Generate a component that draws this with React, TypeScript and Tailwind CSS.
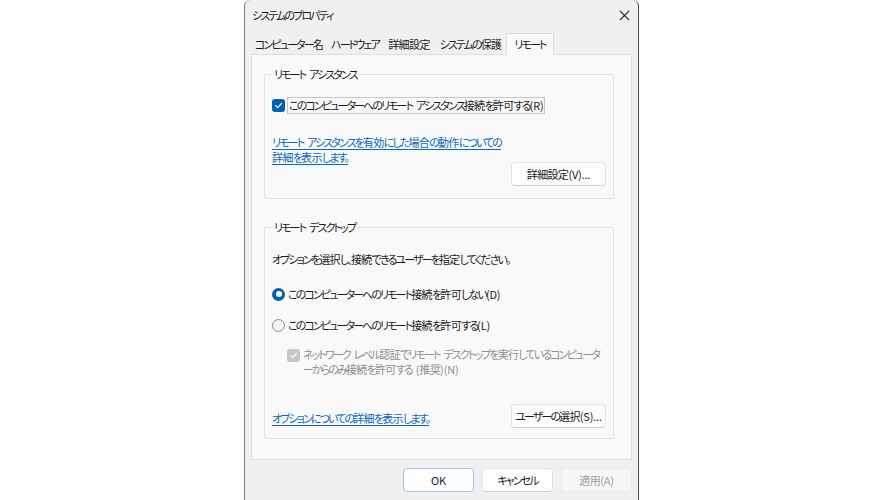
import React from "react";

const font = "font-['Noto_Sans_CJK_JP','Noto_Sans',sans-serif] [font-feature-settings:'palt']";

function J({ s }: { s: string }) {
  const parts = s.match(/( +|[\x21-\x7e]+|[\u4e00-\u9fff]+|[^\x20-\x7e\u4e00-\u9fff]+)/g) || [];
  return (
    <>
      {parts.map((p, i) =>
        /^ +$/.test(p) ? (
          <span key={i} className="tracking-[1.5px]">
            {"\u00a0"}
          </span>
        ) : /^[\x21-\x7e]+$/.test(p) ? (
          <span key={i} className="tracking-[-0.2px]">
            {p}
          </span>
        ) : /^[\u4e00-\u9fff]+$/.test(p) ? (
          <span key={i} className="tracking-[-0.6px]">
            {p}
          </span>
        ) : (
          <span key={i} className="tracking-[-1.9px]">
            {p}
          </span>
        )
      )}
    </>
  );
}

function Check({ disabled }: { disabled?: boolean }) {
  return (
    <span
      className={`flex h-[13px] w-[13px] shrink-0 items-center justify-center rounded-[3px] ${
        disabled ? "bg-[#c6c6c6]" : "bg-[#005fb8]"
      }`}
    >
      <svg width="9" height="9" viewBox="0 0 10 10">
        <path d="M1.8 5.2 L4 7.3 L8.3 2.8" fill="none" stroke="white" strokeWidth="1.3" strokeLinecap="round" strokeLinejoin="round" />
      </svg>
    </span>
  );
}

function Radio({ checked }: { checked?: boolean }) {
  return checked ? (
    <span className="flex h-[13px] w-[13px] shrink-0 items-center justify-center rounded-full bg-[#005fb8]">
      <span className="h-[6px] w-[6px] rounded-full bg-white" />
    </span>
  ) : (
    <span className="h-[13px] w-[13px] shrink-0 rounded-full border border-[#8a8a8a] bg-[#f5f5f5]" />
  );
}

function Btn({ children, primary, disabled, className = "" }: { children: string; primary?: boolean; disabled?: boolean; className?: string }) {
  return (
    <div
      className={`flex h-[24px] items-center justify-center whitespace-nowrap rounded-[4px] border text-[11px] ${
        primary
          ? "border-[#9fc3e6] bg-[#fdfdfd] text-[#1b1b1b]"
          : disabled
          ? "border-[#ececec] bg-[#f6f6f6] text-[#a0a0a0]"
          : "border-[#e2e2e2] border-b-[#d0d0d0] bg-[#fdfdfd] text-[#1b1b1b]"
      } ${className}`}
    >
      <span>
        <J s={children} />
      </span>
    </div>
  );
}

export default function App() {
  const tabs = [
    { t: "コンピューター名", w: "w-[76px]" },
    { t: "ハードウェア", w: "w-[56px]" },
    { t: "詳細設定", w: "w-[52px]" },
    { t: "システムの保護", w: "w-[71px]" },
  ];
  return (
    <div className={`h-[500px] w-[885px] bg-white ${font} whitespace-nowrap text-[11px] text-[#1b1b1b]`}>
      <div className="ml-[244px] flex h-[500px] w-[395px] flex-col rounded-t-[6px] border-x border-l-[#7a7a7a] border-r-[#4a4a4a] bg-[#f0f0f0]">
        {/* title bar */}
        <div className="flex h-[30px] shrink-0 items-center justify-between pl-[7px] pr-[8px]">
          <span className="leading-none">
            <J s="システムのプロパティ" />
          </span>
          <svg width="11" height="11" viewBox="0 0 11 11">
            <path d="M1 1 L10 10 M10 1 L1 10" stroke="#303030" strokeWidth="1.1" />
          </svg>
        </div>
        {/* tabs */}
        <div className="mt-[3px] flex h-[21px] shrink-0 items-end pl-[6px]">
          {tabs.map((x) => (
            <div key={x.t} className={`flex h-[20px] ${x.w} items-center justify-center text-[#1b1b1b]`}>
              <span>
                <J s={x.t} />
              </span>
            </div>
          ))}
          <div className="relative z-10 -mb-px flex h-[22px] w-[48px] items-center justify-center border border-b-0 border-[#dedede] bg-[#f9f9f9]">
            <span>
              <J s="リモート" />
            </span>
          </div>
        </div>
        {/* panel */}
        <div className="mx-[6px] flex h-[406px] shrink-0 flex-col border border-[#dedede] bg-[#f9f9f9] pl-[12px] pr-[17px] pt-[11px]">
          <fieldset className="h-[133px] rounded-[2px] border border-[#e2e2e2] px-[7px]">
            <legend className="ml-[1px] px-[1px] leading-[16px]">
              <J s="リモート アシスタンス" />
            </legend>
            <div className="mt-[15px] flex items-center gap-[2px]">
              <Check />
              <span className="border border-[#c8c8c8] px-[1px] leading-[15px]">
                <J s="このコンピューターへのリモート アシスタンス接続を許可する(R)" />
              </span>
            </div>
            <div className="mt-[21px] leading-[15px] text-[#0a66c2] underline underline-offset-2">
              <J s="リモート アシスタンスを有効にした場合の動作についての" />
              <br />
              <J s="詳細を表示します。" />
            </div>
            <div className="mt-[-3px] flex justify-end">
              <Btn className="w-[95px]">詳細設定(V)...</Btn>
            </div>
          </fieldset>
          <fieldset className="mt-[20px] h-[220px] rounded-[2px] border border-[#e2e2e2] px-[7px]">
            <legend className="ml-[1px] px-[1px] leading-[16px]">
              <J s="リモート デスクトップ" />
            </legend>
            <div className="mt-[16px] leading-[16px]">
              <J s="オプションを選択し、接続できるユーザーを指定してください。" />
            </div>
            <div className="mt-[19px] flex items-center gap-[3px] leading-[16px]">
              <Radio checked />
              <span>
                <J s="このコンピューターへのリモート接続を許可しない(D)" />
              </span>
            </div>
            <div className="mt-[15px] flex items-center gap-[3px] leading-[16px]">
              <Radio />
              <span>
                <J s="このコンピューターへのリモート接続を許可する(L)" />
              </span>
            </div>
            <div className="mt-[14px] flex items-start gap-[3px] pl-[15px] leading-[15px] text-[#8f8f8f]">
              <span className="mt-[2px]">
                <Check disabled />
              </span>
              <span>
                <J s="ネットワーク レベル認証でリモート デスクトップを実行しているコンピュータ" />
                <br />
                <J s="ーからのみ接続を許可する (推奨)(N)" />
              </span>
            </div>
            <div className="mt-[27px] flex items-center justify-between">
              <span className="mt-[4px] leading-[15px] text-[#0a66c2] underline underline-offset-2">
                <J s="オプションについての詳細を表示します。" />
              </span>
              <Btn className="w-[95px]">ユーザーの選択(S)...</Btn>
            </div>
          </fieldset>
        </div>
        {/* bottom buttons */}
        <div className="mt-[8px] flex justify-end gap-[8px] pr-[6px]">
          <Btn primary className="w-[71px]">OK</Btn>
          <Btn className="w-[71px]">キャンセル</Btn>
          <Btn disabled className="w-[71px]">適用(A)</Btn>
        </div>
      </div>
    </div>
  );
}
